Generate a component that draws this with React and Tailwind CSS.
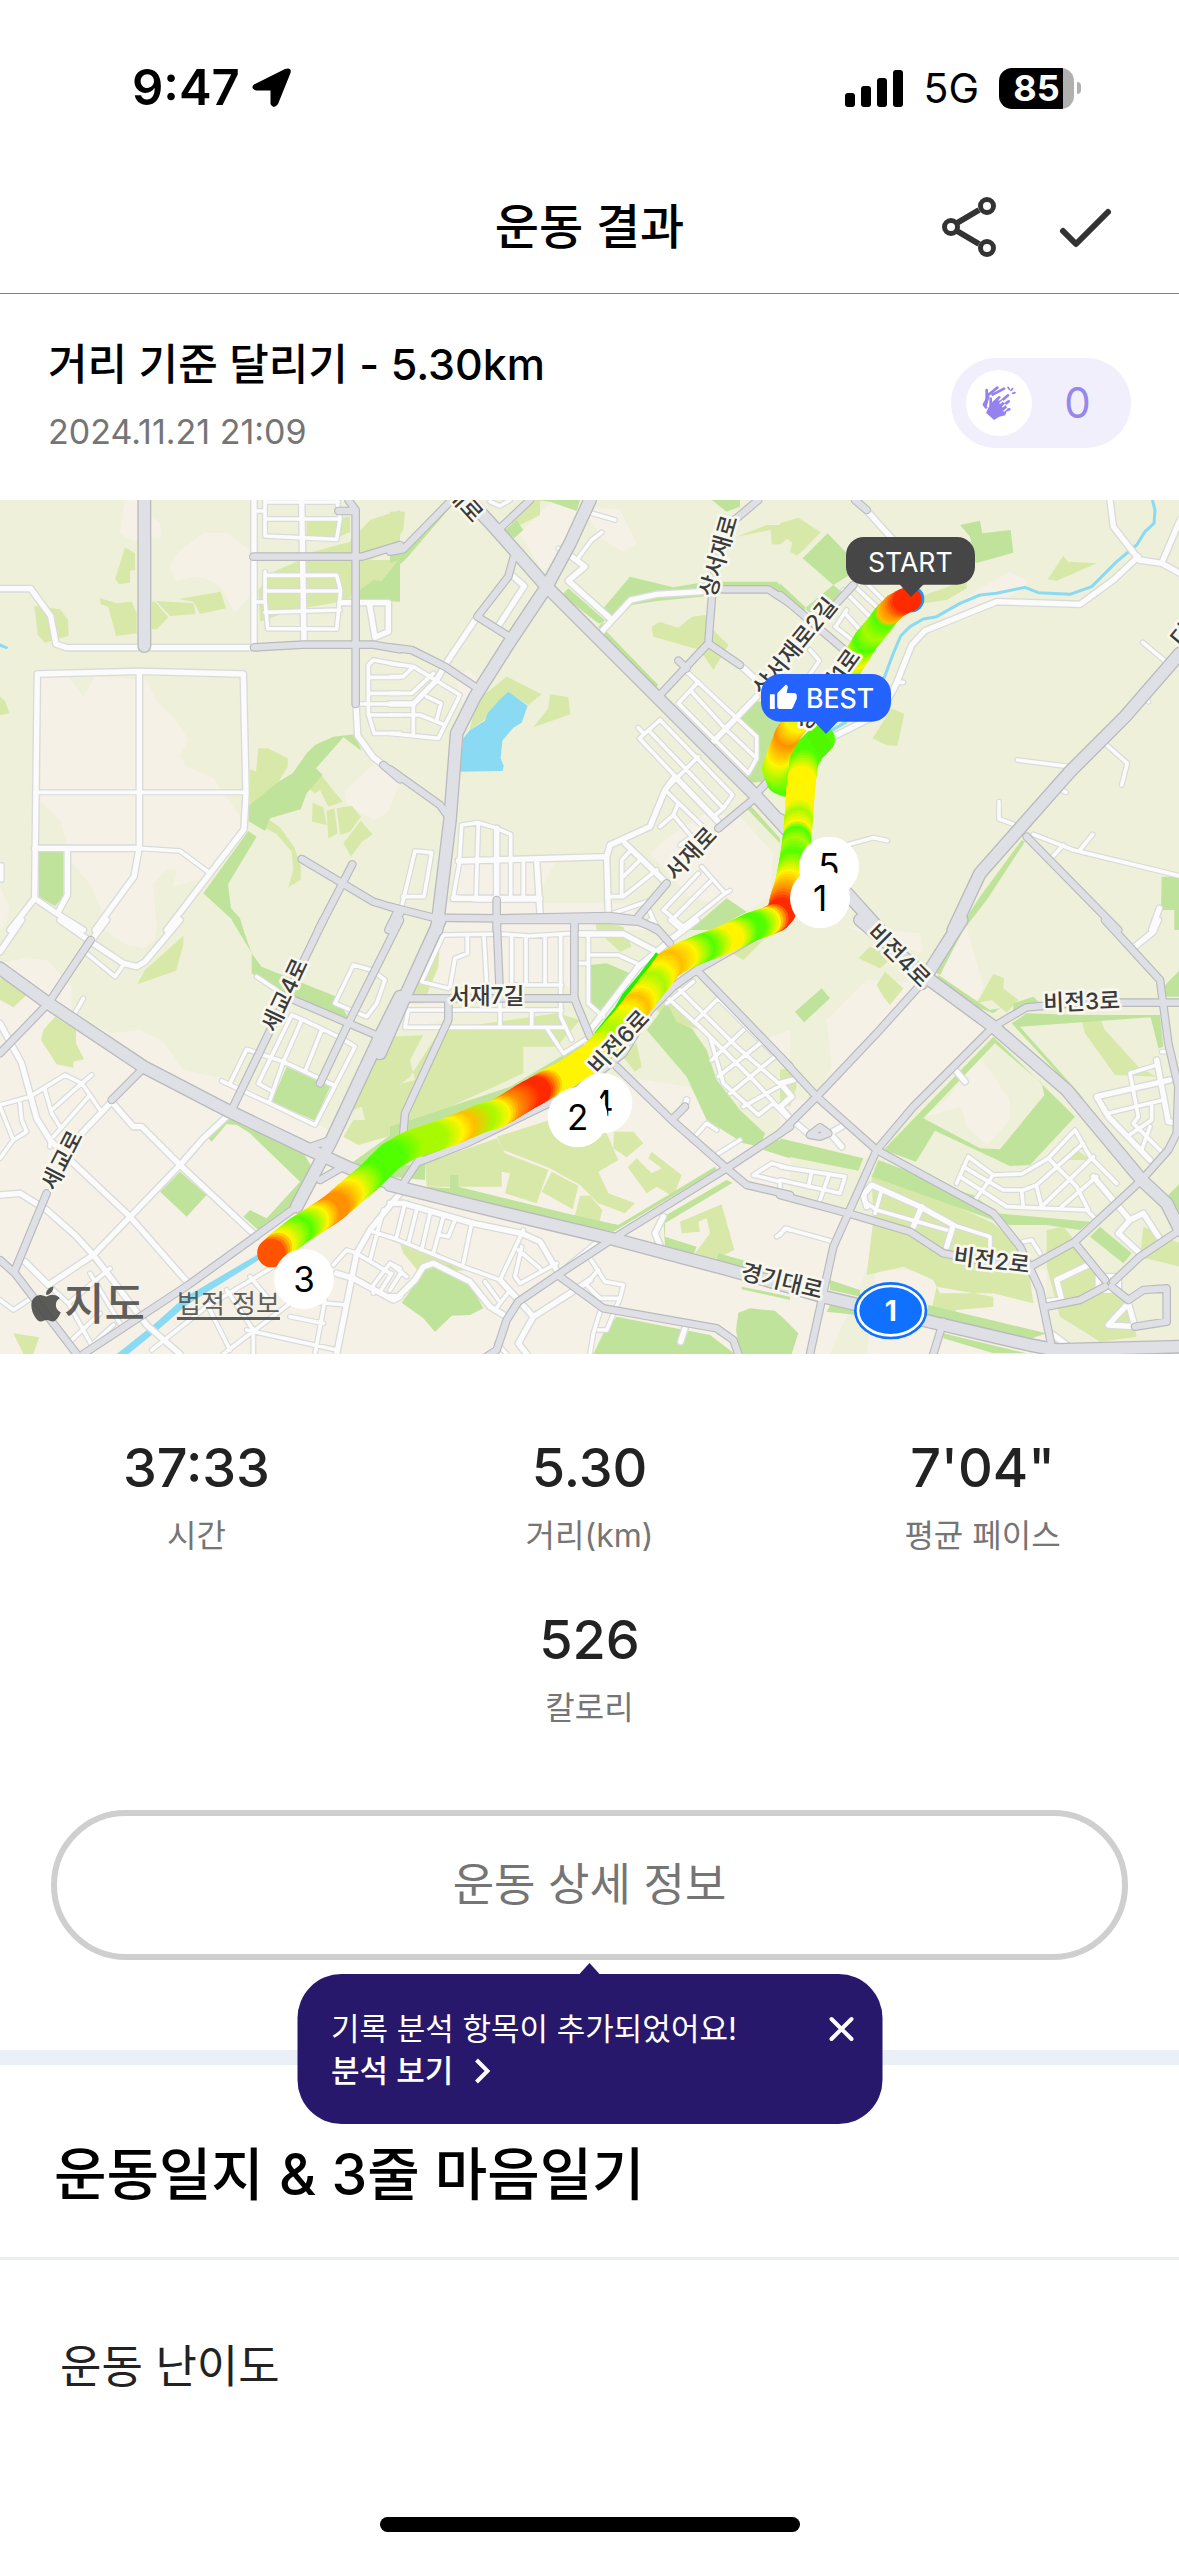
import React from 'react';
import { FaApple } from 'react-icons/fa';
import { MdThumbUp } from 'react-icons/md';

const stats = [
  { value: '37:33', label: '시간' },
  { value: '5.30', label: '거리(km)' },
  { value: `7'04"`, label: '평균 페이스' },
];

// The map is drawn in six tiles, each with its own origin
const tiles = [
  {
    x: 0,
    y: 0,
    beige:
      'M375 0L358 100L400 122L485 110L480 70L455 45V0ZM610 98H680L748 150V290L705 340L665 265L630 240L585 230L530 243L510 205L525 165ZM122 530H205L250 590L285 530L440 540L470 605L510 640L565 718L540 768L560 800L640 835L720 950V990L620 1130L520 1160L530 1110L500 1108L460 1150L470 1290H330L275 1160L215 1085L200 1030L180 960L122 905ZM1125 790L1200 850L1160 940L1120 960L1040 915L1035 870ZM0 1160L28 1220L20 1270L0 1290Z',
    light:
      'M375 142L405 160V210L390 212V248L357 252L345 237ZM300 295L350 310L395 305L410 340V400L348 408L325 320L302 313ZM455 305H465L505 352L470 388H455ZM468 303L580 310L588 342L510 348ZM535 297L662 275L678 325L600 342L580 305ZM103 318L180 328L204 360L206 408L135 428L113 405ZM0 590L15 603L28 640L0 645ZM775 745H803L863 775V800L835 845L750 920V808L768 815ZM797 952L840 982L882 1040L902 1095V1140L865 1162L880 1110L875 1055L830 1003L778 975ZM965 827L1028 905L985 920L960 870L945 880L915 858ZM938 908L970 922L980 975L936 965ZM980 932L1003 925L1013 1000L985 1015ZM1010 925L1055 917L1083 950L1050 995L1020 1005ZM1082 962L1118 1003L1085 1025L1053 1070L1030 1030ZM920 60L1050 50V95L1000 120H920ZM940 155L1050 125L1110 60L1200 30V140L1110 180H1060V250L1050 300L880 330L780 365L775 270L820 215L890 185ZM1070 180H1200V200L1150 243L1080 270Z',
    green:
      'M1080 270L1120 240L1145 243L1200 175V305L1080 300ZM1063 703L1085 753L1030 712L948 805L968 825L920 880L902 928L810 955L795 993L745 963V918L835 845L878 820L920 760L945 735L1000 710ZM745 993L770 1010L684 1153L693 1225L720 1255L730 1290L610 1180ZM117 1055H190V1190L165 1218L117 1190Z',
    river: '',
    pond: 'M0 430L25 442L20 448L0 440Z',
    lane:
      'M104 877H738M418 1045L540 1053L630 1120M795 0V108L1010 118L1020 55L1010 0M795 57H1018M762 33H795M795 6H1015M795 215V300L803 386L1010 387L1022 272L1010 226H795M795 273H1020M795 337L1020 330M762 306H795M1200 495L1120 480L1105 495V640L1122 700H1200M1105 532H1200M1105 580H1200M1068 612H1200M1105 645H1200M5 1095V1140',
    street:
      'M0 266H92L152 348L168 432L200 443H762M762 0V440M905 0L912 430M112 522L418 514L730 522L738 880L732 988L630 1120L500 1290M112 522L104 1195L170 1240L250 1290M104 1195L30 1290M418 514V1040L402 1130L285 1290M104 1045H418M202 1045V1185L175 1235M1068 612L1073 707L1120 772L1150 795M1020 308H1165V395L1125 412L1108 310',
    road: 'M760 170H1085L1200 135M1067 612V30L1045 0M1015 33H1067M762 442L910 434H1120L1200 448M1150 795L1200 838M905 1077L1120 1205L1195 1228M1057 1093L955 1290M1195 1228L1165 1290',
    highway: 'M433 0V438',
  },
  {
    x: 1170,
    y: 0,
    beige:
      'M480 10L590 30L460 220L390 100ZM600 20L690 30L740 130L700 155L640 120L600 60ZM205 520L240 510L260 540L220 610L205 570ZM0 800L20 830L0 860ZM850 1000L950 940L1050 950L1150 1060L1140 1190L1070 1235L900 1190L780 1060ZM190 1080L500 1080L440 1190H190ZM150 1210H700L800 1290H150Z',
    light:
      'M0 35H45L40 90L0 150ZM350 530L455 583L415 615L355 577L290 655L238 690L262 600ZM480 582L535 592L541 643L430 682L475 625ZM785 380L808 366L865 383L905 350L945 345L965 385L1015 435L970 510L930 450L790 410ZM1040 110L1130 75H1200V110L1170 133H1145L1142 90ZM380 80L450 45V0H410L350 60Z',
    green:
      'M0 190L28 180V303H0ZM0 170L180 0H200L50 175L0 220ZM440 0H570L560 33L480 5ZM380 60L400 90L372 115L345 90ZM965 0H1050V20L1010 35ZM535 265L655 370L625 370L515 285ZM720 230L850 262L950 245H1160L1200 285L1185 290L1130 260L935 290L800 303L725 315L640 400L625 380L655 350L640 325ZM650 395L805 555L795 565L635 405ZM1090 600L1130 610L1200 660V840L1060 850L1105 780V710L1050 660ZM900 1290L1010 1195L1070 1235L970 1290ZM1065 920H1085L1170 1015V1030Z',
    river: '',
    pond: 'M355 575L413 617L395 668L370 683L337 722L332 775L341 797L338 813L208 815L220 715L240 690L285 662L293 640L330 598Z',
    lane:
      'M890 515L1100 710V775L1075 820L865 610L925 545M905 575L1010 690L1100 775M300 5L330 18L360 0M810 660L1028 885L1000 925L970 950M745 683L760 700M810 660L748 715L985 965M780 695L1000 925M925 770L825 870M865 910L850 945L810 980M850 945L905 1010L870 1035M825 870L960 1000M215 975L265 968L320 985L362 1003V1190M215 975L208 1090L190 1190L260 1200H450M265 968L258 1195M400 1080V1190M75 1053L125 1058L102 1190H38M75 1053L35 1220M725 1048L695 1080V1190H650M755 1075L700 1130M800 1110L700 1190M770 1205L655 1245M935 1100L1005 1180L880 1280L820 1230L925 1120M1005 1180L1020 1172M960 1145L850 1255M770 1215L800 1280M0 490L70 500L210 585L145 715L0 700M0 580H65L130 520M0 530H40L65 505M0 645H90L165 675M70 612V700M110 590L153 610L140 660M403 258L325 378M635 97L605 120L560 180M600 38L675 60M505 145L510 147',
    street:
      'M935 275L800 283L722 300L635 395M660 355L535 242L585 200L545 170M262 350L165 495L140 540L70 612H0M365 225L403 258L325 378M1050 495L1100 540M1100 590L970 725M855 830L825 870L780 980L660 1035L650 1070L205 1083M650 1070L655 1240M320 985V1200M440 1080L450 1240M855 830L985 965M705 1030L820 1140M190 1195H450',
    road: 'M0 155L40 148L185 0M420 0L330 85M370 175L355 230L262 350L350 405M0 442L65 450L165 500L255 560M0 808L150 915L175 950M1105 0L1010 80L975 200L965 300L955 430L805 590M1000 268H1135L1200 310M955 430L1050 495M865 482L890 505M1100 890L985 985M1090 890L1200 775M830 1150L745 1250M0 1220L130 1253L320 1255L660 1248L745 1260L800 1290M320 1200V1290M553 1255V1290M30 1240L5 1290',
    highway:
      'M600 0L540 130L470 260L350 440L255 590L200 700L180 960L140 1290M200 -40L320 90L470 260L800 590L1100 890L1200 1000',
  },
  {
    x: 2340,
    y: 0,
    beige: 'M600 265L690 215L740 240V260L560 360L480 350Z',
    light:
      'M0 70L55 53L122 97L70 150L50 167L30 155L37 128L0 100ZM850 167L865 185L950 190L830 242L803 238ZM335 625L373 642L352 738L320 736L278 715ZM420 290L560 240V265L500 300L430 310Z',
    green:
      'M143 100L200 160L225 215L160 255L68 175ZM540 75L600 62L607 100L692 90L700 158L587 190L570 110ZM75 325L160 255L190 280L100 350ZM0 250L80 325L70 335L0 265ZM1145 1130H1200V1290H1183V1230H1143ZM725 1020L735 1025L620 1200L550 1290H535L600 1190Z',
    river:
      'M1117 0L1125 30L1122 70L1095 95L1070 135L1010 185L935 260L870 283L775 278L735 262L650 280L600 285L540 310L470 350L430 357L390 380L362 408L340 460L310 540M200 665L140 700',
    pond: '',
    lane:
      'M225 260L300 330M165 380L230 430M200 330L170 375M90 450L118 482L85 530M250 240L310 300M190 270L290 370M200 345L240 390M712 780L870 800M657 905V957L715 978M760 1003L880 1050L1200 1128M938 1003L900 1050M850 1035L815 1073M1088 427L1155 483M1100 595L1105 605M980 735L1042 790L1025 855M850 873L858 877M200 1035L280 1013L322 1022M350 547H370',
    street:
      'M990 0L1000 80L1078 180L1145 190L1200 220M1145 190L1200 60M1075 170L1000 240L900 313L650 305L435 392L395 435L345 560L300 640L150 715M240 10L340 120M1138 1225L1115 1290',
    road: 'M0 285L205 460M220 255L160 320M225 0L260 30M1015 1290L740 1010',
    highway:
      'M1200 460L1035 650L870 815L715 990L600 1120L520 1290M0 960L210 1190L300 1290',
  },
  {
    x: 0,
    y: 1260,
    beige:
      'M0 130L80 115L140 120L215 200V280L330 340L420 330L490 365L550 450L690 480L900 580L1000 640L1200 590V1302H0ZM280 0H470L465 60L430 85L380 75L330 40Z',
    light:
      'M550 47V75L528 152L412 193L435 150ZM0 175L20 180L80 225L40 262L0 240ZM165 290L228 330V370L252 418L220 425V443L170 433L123 360L130 330ZM1140 390H1200V640L1075 675L1030 650L1060 600H1095L1085 560L1060 570L1100 480ZM40 1240L118 1252L100 1302H70Z',
    green:
      'M695 0H720L755 100L785 140L1010 230L1045 295L870 230L755 160V100ZM860 440L990 500L945 602L815 545ZM700 595L905 690L935 740L905 800L890 860L780 935L730 890L750 870L800 895L900 785L750 640L710 615L680 612L635 665L625 655L685 600ZM540 755L620 825L560 890L480 815ZM1060 725L1200 625V770L1090 740Z',
    river: '',
    pond: 'M770 1005L785 1015L560 1155L480 1225L385 1302H350L460 1215L550 1135Z',
    lane:
      'M260 100L345 170L370 135M222 285L250 235M0 555L90 530L195 465L245 490L270 525L300 570M245 490L275 465M245 490L155 570M270 525L160 650M135 510L155 580L180 620M0 560L40 660L0 715M60 550L65 600L80 635L40 660M770 170L830 210M1060 135L1115 150L1155 180L1130 250L1100 290L1005 250ZM665 483L810 550L945 615L1065 380L1025 355L910 300L875 285L775 490L810 510M690 490L740 388L850 425L1000 495M965 330L915 455M905 300L850 425L810 540M820 1040L620 1160L455 1290M1000 1035L1040 990L1070 1000M1070 1000L1170 1060M1120 935L1180 955M1150 870L1110 1020M870 1140L1040 1155M870 1190L970 1210M740 1230L1010 1290M975 1140L945 1302M870 1150L670 1302M750 1070L800 1130M620 1150L690 1290M680 1110L760 1230V1302M145 1095L205 1150L275 1275L340 1215M205 1150L330 1045M210 1265L300 1180M270 1060L360 1210M1120 1120V1095L1170 1030L1200 1045M1140 1115L1175 1060M0 1140L40 1170L100 1130M150 670V680',
    street:
      'M180 0L272 65L370 130L410 140L435 125L540 0M320 0L272 65M65 0L0 95M0 310L65 430L110 595L150 660L210 720L390 890L565 1090M335 545L245 640M335 545L400 620H425L540 735L770 950M685 585L610 655L540 735L280 1005L145 1095M140 870L225 945L280 1005L440 1215L540 1302M75 1025L145 1095M0 825L60 820L140 870M1200 820L1110 930L1070 1000L1010 1302M1010 1060L1060 1075L1180 1140L1200 1130',
    road: 'M272 60L145 250L0 400M430 445L335 540M970 0L695 570M1200 0L1045 310L960 490M870 235L1140 350M140 820L45 1050M0 1020L45 1060L230 1302M890 860L565 1095L250 1302M920 685L990 660M960 780L1030 740',
    highway: 'M0 145L145 250L430 440L690 575L920 685L1050 745L1200 800M1200 230L1140 350L990 670L890 860',
  },
  {
    x: 1170,
    y: 1260,
    beige:
      'M380 490L700 470L900 500L960 600L1200 700V1302H0V760L150 700ZM180 20H560V200H95ZM60 215L165 240L160 300L40 330ZM1120 360L1200 330V440Z',
    light:
      'M320 650L340 690L480 745L570 795L625 850L705 880L735 850L655 820L625 755L685 720L650 640L480 600ZM105 730L320 655L345 700L475 750L440 850L345 820L360 760L335 755V800L110 800ZM485 755L565 797L548 868L455 815ZM570 827H600L637 870L625 920L550 905ZM672 635H730L760 670L710 712L670 685ZM740 715L785 760L815 745L775 715L785 695L875 765L850 830L800 800L770 820L713 742ZM870 905L995 853L1033 990L970 1020L915 1000L960 940L950 895L925 905L930 935L875 940ZM0 350L100 345L60 420L75 480L0 500ZM60 470L150 330L500 280L570 300L500 380L400 380V460L180 560L60 600L0 620V520ZM615 0L700 20L725 80L690 95L620 30ZM30 970L130 990L240 1050L90 1060L40 1000ZM1010 90L1120 60L1060 120ZM690 400L740 370L755 440L735 455ZM780 250L830 220L960 340L900 320L830 300ZM70 150L150 60L145 140L100 250L60 250Z',
    green:
      'M600 135L650 130L720 160L640 280L600 250ZM770 330L830 250L860 305L905 325L950 390L980 480L1050 570L1125 640L1110 680L1060 670L950 600L890 470ZM1130 650L1200 670V715L1120 690ZM0 620L150 570L360 500L580 370L600 400L440 500L100 640L0 680ZM0 740L105 730V780L0 770ZM110 800L180 805V765H205V800L550 885L685 915L975 740L980 750L670 935L110 830ZM820 890L1010 780L1028 788L825 910V950L920 980L910 1005L825 980ZM985 1000L1200 1060V1080L1030 1040L980 1020ZM100 1050L180 1035L240 1090L280 1165L240 1185L185 1187L135 1236L100 1195L35 1148L80 1085ZM680 1190L960 1245L1035 1302H610L640 1240ZM1045 1178L1080 1165L1155 1172L1200 1215V1302H1050L1038 1230ZM1055 1100L1200 1130V1140L1055 1108Z',
    river: '',
    pond: '',
    lane:
      'M160 45L330 42L420 48L550 40L700 42L790 90M160 45L95 185L175 205M232 50V100L195 115L180 200M282 50L290 195M365 50V195H515M408 50V195M465 50V195M512 45V290L545 360M595 45V250L640 290M595 105H685L740 130M565 130H595M600 350L520 400L470 325M55 270H515M55 270L45 322H520M330 240V320M425 270V320M840 0L880 35M780 0L795 20M910 185L830 250M835 235L960 350L1000 490L1105 585L1150 550L1200 600M870 210L1040 380L1200 520M985 235L920 300M1060 330L965 420M1110 370L985 470M1155 410L1020 520M1200 480L1060 560M920 310L1100 490L1180 580M985 235L1160 410M905 660L950 610L980 630M985 700L1050 660M1090 765L1145 730L1200 745M1090 765L1170 785V810M1160 950L1190 925L1200 930M45 850L20 950M80 870L55 970M120 880L95 990M160 890L130 1000M195 900L175 950L150 945M245 910L220 1030M0 950L220 1040L330 1080M400 930L330 1080M385 990L450 1045M395 980L375 1070L390 1090L500 1030M0 1030L50 1070M35 1055L0 1110M285 1085L325 1140M360 1110L315 1170M600 1015L645 1085L700 1095L690 1135L650 1230H625M585 1090L630 1135H690M630 1175L610 1240L600 1302M625 1050L590 1090M320 1270L350 1302',
    street:
      'M550 42H700L790 90M830 70L745 140L600 330M920 0L840 60M820 890L795 940L820 1000M0 850L40 850L250 910L395 940L450 965L500 1050M330 1080L385 1140L430 1190M0 1130H25L75 1080L100 1040L130 1030L240 1085L300 1160L350 1190M620 970L510 1060M600 1080L540 1120L430 1190L385 1270L410 1302M885 1225L872 1265M890 540L885 555',
    road: 'M45 235H555M320 0L330 235M553 0V235L600 350M175 235V300L45 580L40 640M90 715L40 790M320 0H660L745 5L800 25L840 70M1200 -10L920 150L850 200L780 270L700 400L560 510L230 670L90 725M920 150L1200 440M680 440L845 600L1010 745L1070 795L1200 825M845 600L885 560M1200 620L1010 745L670 955L510 1060L385 1145L350 1200L320 1290L290 1310M510 1070L640 1165L980 1225L1030 1260L1045 1302',
    highway: 'M150 0L45 230L-30 400M0 795L220 850L660 955L1000 1045L1200 1100',
  },
  {
    x: 2340,
    y: 1260,
    beige:
      'M430 190L640 330L290 690L110 530L155 440L140 300L260 180ZM480 150L560 20L610 200L590 240L520 200ZM0 850L250 880L300 950L260 1302H0ZM260 1050H800V1302H150ZM0 540H110L290 690L250 720L0 660ZM600 410L690 540V600L620 675L560 620L545 560L430 590L500 540ZM200 20L420 40L430 100L300 60Z',
    light:
      'M235 115L270 80L340 110L300 145ZM315 155L370 205L330 255L310 230L290 195ZM640 162L672 175L670 205L715 240L680 278L635 240L590 250ZM900 285H955L975 330L1075 440L1130 470L1005 465L915 340ZM275 765L400 800L640 910L740 1000L760 1150L640 1120H480L460 1080L370 1040L260 1065L280 900ZM800 930L850 920L985 1080L1050 1150L1070 1250L960 1265L840 1190L800 1040ZM1090 920L1200 970V1040L1080 1010ZM470 1100L640 1130V1160L530 1170L490 1210L450 1190ZM880 680L930 720L860 720ZM0 450L30 440L50 500L30 560L0 540Z',
    green:
      'M640 350L885 590L750 735L690 738L465 632L408 725L310 690ZM645 370L430 595L600 685L660 688L793 525L785 490ZM295 720L560 820L580 825L650 880L930 905L900 930L800 915H690L640 900L275 770ZM0 655L250 715L235 752L0 705ZM700 250L760 230L780 250L700 290ZM695 310L740 280L900 285H1140L1150 380L1135 385L1112 292L720 320L915 540L870 500ZM475 165L600 250L630 270L660 265L640 280L600 265L470 175ZM45 275L125 205L150 235L72 307ZM1200 150V230H1160L1150 200ZM960 920L1055 1000L1030 1030L930 950ZM1200 790V880L1165 825ZM150 1080L240 1110V1130L150 1110ZM445 1155L800 1240L740 1260L440 1190ZM0 1185L55 1240L35 1302H0ZM490 1240L740 1300H640L490 1255ZM150 1155L300 1190L230 1185L140 1175ZM550 0H565L480 165L470 160Z',
    river: '',
    pond: '',
    lane:
      'M1130 435L1050 460L1075 590L1060 610L1150 700M985 580L1150 540M1115 555V600L1040 650M1110 620L1085 690M565 710L640 765L725 762L805 715L885 630L930 710L1010 790M565 710L530 790M540 770L680 860L920 870L945 895M550 740L600 770L670 810H730L770 795L910 670M640 765L585 840M805 715L890 800M725 812L730 862M770 800L785 860L940 710M845 860L950 770M890 800L925 870M400 920L425 860M285 880L305 810M260 850L290 870L500 930M0 740L195 770L180 820L0 780M145 770L120 840M95 755L85 800M0 945L15 925L160 965M1145 395H1160M730 965L755 960L780 1000M520 915L630 950V980',
    street:
      'M1065 80L1120 35L1135 0M530 455L555 485M1170 480L950 530L985 590L1110 720M1130 420L1165 605L1190 610M940 770L1050 900L1090 880L1135 950M1050 900L1015 940L1075 995M260 860L250 825L275 795L420 860L520 915L500 980M400 920L425 860M0 490L40 480M0 560L25 590L90 645M150 640L185 620M150 640L185 680M10 500L35 530L0 560M925 1035L830 1080L845 1140L800 1145M1045 1150L985 1215L1065 1220ZM820 1245L880 1290M955 1070H1015V1110H955Z',
    road: 'M640 320L400 560L290 690L205 880L160 980L90 1302M640 320L740 262L900 248H1200M975 0L1140 180L1165 370L1195 500L1190 640L1165 690L1085 780L885 965L760 1035M0 410L110 530L290 690L640 880L720 980L780 1110L815 1280M0 825L205 880L390 935L490 1000L700 1040M885 970L975 1080M995 1100L1045 1140L1090 1110L1160 1105V1205L1065 1220M800 1160L900 1140L975 1100M1000 1085L1080 1010L1200 930M490 1205L460 1302M425 190L290 340L110 530L0 640M90 645L120 622L145 640L120 650Z',
    highway:
      'M240 0L450 180L640 320L860 510L1085 780L1160 850L1200 930M545 0L425 190M-40 1080L130 1130L450 1205L750 1275L830 1290L1200 1280',
  },
];

const layers = [
  { kind: 'lane', width: 18, color: '#d9dbda' },
  { kind: 'street', width: 24, color: '#d9dbda' },
  { kind: 'lane', width: 11, color: '#fbfbfb' },
  { kind: 'street', width: 16, color: '#fbfbfb' },
  { kind: 'road', width: 26, color: '#b9babe' },
  { kind: 'highway', width: 42, color: '#b9babe' },
  { kind: 'road', width: 19, color: '#dfe0e5' },
  { kind: 'highway', width: 34, color: '#dfe0e5' },
];

const RED = [255, 42, 0];
const ORANGE = [255, 144, 0];
const AMBER = [255, 190, 0];
const YELLOW = [255, 245, 0];
const LIME = [168, 250, 0];
const GREEN = [80, 255, 0];

const outbound = [
  [2733, 298, RED],
  [2722, 302, RED],
  [2692, 318, ORANGE],
  [2675, 335, AMBER],
  [2665, 345, GREEN],
  [2635, 385, LIME],
  [2605, 420, GREEN],
  [2575, 470, YELLOW],
  [2540, 520, GREEN],
  [2480, 600, LIME],
  [2400, 660, YELLOW],
  [2368, 705, ORANGE],
  [2345, 765, YELLOW],
  [2330, 805, LIME],
  [2345, 845, GREEN],
  [2415, 870, LIME],
];

const inbound = [
  [2462, 718, GREEN],
  [2430, 750, GREEN],
  [2412, 785, GREEN],
  [2405, 840, YELLOW],
  [2401, 880, YELLOW],
  [2398, 935, YELLOW],
  [2395, 965, LIME],
  [2393, 1000, YELLOW],
  [2390, 1020, GREEN],
  [2386, 1050, LIME],
  [2380, 1090, GREEN],
  [2368, 1150, YELLOW],
  [2352, 1200, ORANGE],
  [2345, 1235, RED],
  [2330, 1252, RED],
  [2300, 1265, YELLOW],
  [2255, 1280, GREEN],
  [2235, 1290, GREEN],
  [2190, 1312, YELLOW],
  [2160, 1325, YELLOW],
  [2105, 1345, GREEN],
  [2050, 1368, YELLOW],
  [2005, 1395, AMBER],
  [1980, 1430, YELLOW],
  [1955, 1460, LIME],
  [1925, 1500, YELLOW],
  [1905, 1525, AMBER],
  [1880, 1558, YELLOW],
  [1825, 1620, LIME],
  [1780, 1670, YELLOW],
  [1700, 1722, YELLOW],
  [1650, 1748, YELLOW],
  [1610, 1772, RED],
  [1580, 1788, RED],
  [1520, 1825, ORANGE],
  [1490, 1842, YELLOW],
  [1445, 1855, LIME],
  [1385, 1880, AMBER],
  [1350, 1895, YELLOW],
  [1300, 1912, LIME],
  [1230, 1935, LIME],
  [1170, 1970, GREEN],
  [1110, 2030, GREEN],
  [1050, 2080, YELLOW],
  [1005, 2120, ORANGE],
  [980, 2138, ORANGE],
  [945, 2160, YELLOW],
  [895, 2192, GREEN],
  [840, 2235, YELLOW],
  [808, 2265, RED],
];

const traceDots = (points) => {
  const dots = [];
  points.slice(1).forEach(([x2, y2, c2], i) => {
    const [x1, y1, c1] = points[i];
    const steps = Math.max(1, Math.round(Math.hypot(x2 - x1, y2 - y1) / 8));
    for (let s = 0; s < steps; s++) {
      const t = s / steps;
      const color = c1.map((c, k) => Math.round(c + (c2[k] - c) * t));
      dots.push({ x: x1 + (x2 - x1) * t, y: y1 + (y2 - y1) * t, color: `rgb(${color.join(',')})` });
    }
  });
  return dots;
};

const roadNames = [
  { text: '재로', x: 1395, y: 8, angle: 48 },
  { text: '상서재로', x: 2155, y: 168, angle: -74 },
  { text: '상서재로2길', x: 2384, y: 440, angle: -51 },
  { text: '상서재1로', x: 2482, y: 568, angle: -54 },
  { text: '서재로', x: 2072, y: 1060, angle: -47 },
  { text: '더', x: 3545, y: 405, angle: -50 },
  { text: '서재7길', x: 1460, y: 1486, angle: 0 },
  { text: '비전6로', x: 1855, y: 1625, angle: -47 },
  { text: '비전4로', x: 2698, y: 1366, angle: 45 },
  { text: '비전3로', x: 3245, y: 1504, angle: -2 },
  { text: '비전2로', x: 2975, y: 2280, angle: 7 },
  { text: '경기대로', x: 2346, y: 2342, angle: 14 },
  { text: '세교4로', x: 853, y: 1485, angle: -65 },
  { text: '세교로', x: 185, y: 1980, angle: -63 },
];

const kmPins = [
  { km: 5, x: 2487, y: 1100 },
  { km: 4, x: 1807, y: 1810 },
  { km: 3, x: 912, y: 2337 },
  { km: 2, x: 1733, y: 1852 },
  { km: 1, x: 2460, y: 1195 },
];

const RouteMap = () => (
  <div className="relative">
    <svg viewBox="0 0 3537 2562" className="block w-full" role="img" aria-label="달리기 경로">
      <rect width="3537" height="2562" fill="#eef0da" />
      {[
        ['beige', '#f6f1e6'],
        ['light', '#d8e8a8'],
        ['green', '#c0e39b'],
        ['pond', '#8adaf4'],
      ].map(([kind, color]) => (
        <g key={kind} fill={color} fillRule="evenodd">
          {tiles.map((t) => (
            <path key={`${t.x}-${t.y}`} d={t[kind]} transform={`translate(${t.x} ${t.y})`} />
          ))}
        </g>
      ))}
      <g fill="none" stroke="#8adaf4" strokeWidth="9" strokeLinejoin="round">
        {tiles.map((t) => (
          <path key={`${t.x}-${t.y}`} d={t.river} transform={`translate(${t.x} ${t.y})`} />
        ))}
      </g>
      {layers.map((layer, i) => (
        <g
          key={i}
          fill="none"
          stroke={layer.color}
          strokeWidth={layer.width}
          strokeLinejoin="round"
          strokeLinecap="round"
        >
          {tiles.map((t) => (
            <path key={`${t.x}-${t.y}`} d={t[layer.kind]} transform={`translate(${t.x} ${t.y})`} />
          ))}
        </g>
      ))}

      {/* Run trace */}
      <circle cx="2733" cy="297" r="40" fill="#1e96ff" />
      {traceDots(outbound)
        .reverse()
        .map((dot, i) => (
          <circle key={i} cx={dot.x - 6} cy={dot.y} r="38" fill={dot.color} />
        ))}
      <path
        d="M1980 1366L1927 1435L1880 1490L1857 1530L1795 1608"
        fill="none"
        stroke="#20f000"
        strokeWidth="30"
        strokeLinejoin="round"
      />
      {traceDots(inbound).map((dot, i) => (
        <circle key={i} cx={dot.x} cy={dot.y} r="43" fill={dot.color} />
      ))}
      <path d="M2450 670L2500 738L2465 775L2420 710Z" fill="#50f800" />

      <g
        fill="#3a3a3c"
        stroke="#f8f8ee"
        strokeWidth="16"
        strokeLinejoin="round"
        paintOrder="stroke"
        fontSize="68"
        fontWeight="500"
        textAnchor="middle"
      >
        {roadNames.map((r) => (
          <text key={r.text} transform={`translate(${r.x} ${r.y}) rotate(${r.angle})`} y="25">
            {r.text}
          </text>
        ))}
      </g>

      {/* Route shield */}
      <ellipse cx="2672" cy="2432" rx="110" ry="86" fill="#1070ff" />
      <ellipse cx="2672" cy="2432" rx="98" ry="74" fill="none" stroke="#fff" strokeWidth="8" />
      <text x="2672" y="2462" fontSize="84" fontWeight="700" fill="#fff" textAnchor="middle">
        1
      </text>

      {kmPins.map((pin) => (
        <g key={pin.km}>
          <circle cx={pin.x} cy={pin.y} r="90" fill="#fff" />
          <text x={pin.x} y={pin.y + 38} fontSize="105" textAnchor="middle" fill="#000">
            {pin.km}
          </text>
        </g>
      ))}

      <g>
        <rect x="2538" y="111" width="387" height="143" rx="54" fill="#464646" />
        <path d="M2696 250H2774L2733 291Z" fill="#464646" />
        <text x="2731" y="215" fontSize="80" fill="#fff" textAnchor="middle">
          START
        </text>
      </g>
      <g>
        <rect x="2283" y="522" width="390" height="143" rx="58" fill="#2463ff" />
        <path d="M2438 660H2518L2478 702Z" fill="#2463ff" />
        <MdThumbUp x="2306" y="550" size={88} color="#fff" />
        <text x="2520" y="624" fontSize="80" fontWeight="500" fill="#fff" textAnchor="middle">
          BEST
        </text>
      </g>
    </svg>

    <div className="absolute bottom-6 left-7 flex items-center text-[#4a4a48]/90">
      <FaApple className="h-10 w-9" />
      <span className="text-[44px] leading-[52px] font-medium">지도</span>
      <a
        href="#legal"
        className="ml-8 text-[26px] leading-[52px] underline decoration-3 underline-offset-4"
      >
        법적 정보
      </a>
    </div>
  </div>
);

const StatusBar = () => (
  <div className="flex h-40 items-center justify-between pt-4 pr-[98px] pl-[132px]">
    <div className="flex items-center gap-3">
      <span className="text-[49px] leading-14 font-semibold">9:47</span>
      <svg viewBox="0 0 40 40" className="size-10">
        <path
          d="M2 16.500L33 1Q40 -1 38.500 5L26 36Q21.500 42 18.500 36V22.500H4Q-2 20 2 16.500Z"
          fill="#000"
        />
      </svg>
    </div>
    <div className="flex items-center gap-5">
      <svg viewBox="0 0 58 38" className="h-[38px] w-[58px]">
        <rect x="0" y="24" width="10" height="14" rx="3" />
        <rect x="16" y="17" width="10" height="21" rx="3" />
        <rect x="32" y="9" width="10" height="29" rx="3" />
        <rect x="48" y="1" width="10" height="37" rx="3" />
      </svg>
      <span className="text-[41px] leading-14">5G</span>
      <div className="flex items-center gap-[3px]">
        <div className="flex h-[41px] w-[75px] items-center justify-center rounded-[13px] bg-linear-to-r from-black from-85% to-[#b0b0b0] to-85%">
          <span className="text-[36px] leading-10 font-bold text-white">85</span>
        </div>
        <div className="h-3 w-1 rounded-r-full bg-[#b0b0b0]" />
      </div>
    </div>
  </div>
);

const Header = () => (
  <header className="grid h-[134px] grid-cols-[1fr_auto_1fr] items-center border-b border-[#808080] px-16">
    <h1 className="col-start-2 text-[48px] leading-[60px] font-medium">운동 결과</h1>
    <div className="flex justify-end gap-[50px]">
      <button type="button" aria-label="공유">
        <svg viewBox="0 0 72 72" className="size-[72px]" fill="none" stroke="#333" strokeWidth="5">
          <path d="M24 32L46 19M24 40L46 53" strokeWidth="6" />
          <circle cx="18" cy="36" r="6.500" />
          <circle cx="54" cy="15" r="6.500" />
          <circle cx="54" cy="57" r="6.500" />
        </svg>
      </button>
      <button type="button" aria-label="완료">
        <svg
          viewBox="0 0 60 60"
          className="size-[60px]"
          fill="none"
          stroke="#333"
          strokeWidth="6"
          strokeLinecap="round"
          strokeLinejoin="round"
        >
          <path d="M8 34L21 47L53 15" />
        </svg>
      </button>
    </div>
  </header>
);

const ClapIcon = () => (
  <svg
    viewBox="0 0 102 102"
    className="size-[34px]"
    fill="none"
    stroke="#9682ef"
    strokeWidth="8"
    strokeLinecap="round"
    strokeLinejoin="round"
  >
    <path d="M14 12V46L6 56L12 64M22 24L46 5M32 26L66 8M14 30L24 22" />
    <path d="M10 40L22 24V34L14 62L2 54Z" fill="#9682ef" stroke="none" />
    <path d="M26 38V60M34 50L52 34M44 58L78 28M50 68L80 46M56 78L82 70" />
    <path d="M22 60L40 42L60 44L76 66L70 88L52 92L36 102L12 80Z" fill="#9682ef" stroke="none" />
    <path d="M54 52L62 44M62 62L70 55M66 75L74 68" stroke="#fff" strokeWidth="4" />
    <path d="M78 4L82 10M92 8L87 13M99 20L92 22" strokeWidth="5" />
  </svg>
);

const Stat = ({ value, label }) => (
  <div className="flex flex-col items-center gap-4">
    <span className="text-[54px] leading-16 font-medium text-[#222]">{value}</span>
    <span className="text-[32px] leading-10 text-[#757575]">{label}</span>
  </div>
);

const Tooltip = () => (
  <div className="absolute top-full left-1/2 mt-[14px] flex h-[150px] w-[585px] -translate-x-1/2 justify-between rounded-[44px] bg-[#27186b] pt-[34px] pr-[26px] pl-[34px] text-white">
    <svg viewBox="0 0 20 11" className="absolute bottom-full left-1/2 h-[11px] w-5 -translate-x-1/2">
      <path d="M0 11L10 0L20 11Z" fill="#27186b" />
    </svg>
    <div className="text-[31px] leading-[42px]">
      <p>기록 분석 항목이 추가되었어요!</p>
      <a href="#analysis" className="flex items-center gap-5 font-medium">
        분석 보기
        <svg viewBox="0 0 18 26" className="h-[26px] w-[18px]" fill="none" stroke="#fff" strokeWidth="4">
          <path d="M3 2L14 13L3 24" />
        </svg>
      </a>
    </div>
    <button type="button" aria-label="닫기" className="h-[42px]">
      <svg
        viewBox="0 0 30 30"
        className="size-[30px]"
        fill="none"
        stroke="#fff"
        strokeWidth="4"
        strokeLinecap="round"
      >
        <path d="M5 5L25 25M25 5L5 25" />
      </svg>
    </button>
  </div>
);

const App = () => {
  return (
    <div className="bg-white font-[Inter,'Noto_Sans_CJK_KR',sans-serif] text-black">
      <StatusBar />
      <Header />

      <main>
        <section className="flex items-end justify-between px-12 pt-10 pb-12">
          <div className="flex flex-col gap-[18px]">
            <h2 className="text-[43px] leading-[60px] font-medium">거리 기준 달리기 - 5.30km</h2>
            <p className="text-[34px] leading-10 text-[#757575]">2024.11.21 21:09</p>
          </div>
          <button
            type="button"
            aria-label="박수"
            className="mb-1 flex h-[90px] w-[180px] items-center rounded-full bg-[#f1effc] pl-[15px]"
          >
            <span className="flex size-[66px] items-center justify-center rounded-full bg-white">
              <ClapIcon />
            </span>
            <span className="flex-1 pr-2 text-center text-[42px] leading-[60px] text-[#9787e8]">
              0
            </span>
          </button>
        </section>

        <RouteMap />

        <section className="pt-[82px]">
          <div className="grid grid-cols-3">
            {stats.map((s) => (
              <Stat key={s.label} {...s} />
            ))}
          </div>
          <div className="mt-[52px]">
            <Stat value="526" label="칼로리" />
          </div>
          <div className="relative mx-[51px] mt-[82px]">
            <button
              type="button"
              className="h-[150px] w-full rounded-full border-6 border-[#cfcfcf] text-[45px] leading-[60px] text-[#757575]"
            >
              운동 상세 정보
            </button>
            <Tooltip />
          </div>
        </section>

        <div className="mt-[90px] h-[15px] bg-[#ebeff8]" />

        <section>
          <h2 className="border-b-3 border-[#e9eef4] px-[54px] pt-[74px] pb-[46px] text-[57px] leading-[72px] font-medium">
            운동일지 &amp; 3줄 마음일기
          </h2>
          <h3 className="px-[60px] pt-[77px] text-[45px] leading-[60px] text-[#222]">운동 난이도</h3>
        </section>
      </main>

      {/* Home indicator */}
      <div className="flex justify-center pt-[120px] pb-6">
        <div className="h-[15px] w-[420px] rounded-full bg-black" />
      </div>
    </div>
  );
};

export default App;
